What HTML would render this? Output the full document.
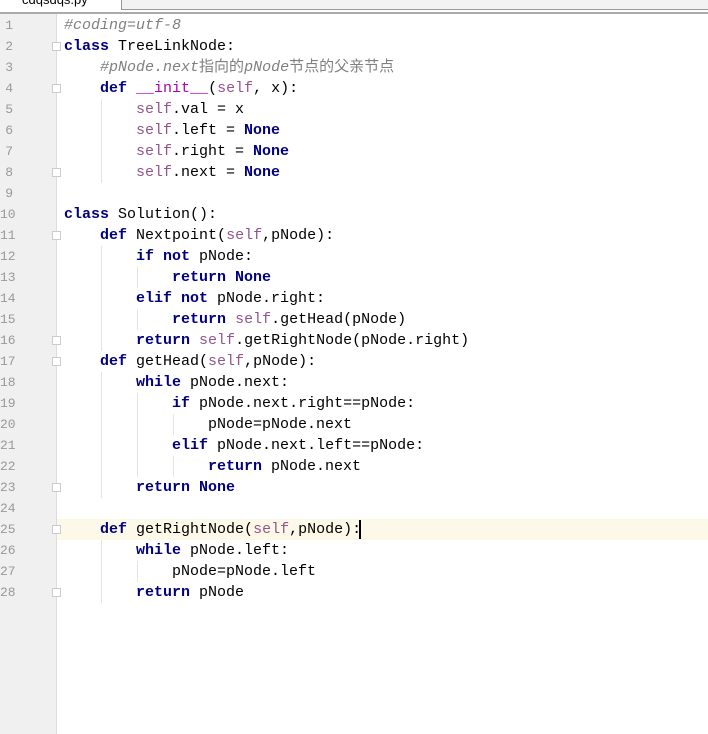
<!DOCTYPE html>
<html><head><meta charset="utf-8"><style>
body{margin:0;width:708px;height:734px;overflow:hidden;background:#fff;position:relative;font-family:"Liberation Mono","Noto Sans CJK SC",monospace;}
.top{position:absolute;left:0;top:0;width:708px;height:9px;background:#f2f2f2;border-bottom:1px solid #999;}
.tab{position:absolute;left:0;top:-6px;width:121px;height:16px;background:#fff;border-right:1px solid #999;font:13px "Liberation Sans",sans-serif;color:#000;}
.tab span{position:absolute;left:22px;top:-2px;}
.sep{position:absolute;left:0;top:12px;width:708px;height:2px;background:#aaa;}
.gut{position:absolute;left:0;top:14px;width:56px;height:720px;background:#f0f0f0;border-right:1px solid #ddd;}
.hl{position:absolute;left:57px;top:519px;width:651px;height:21px;background:#fdf9e8;}
.n{position:absolute;left:0;width:13px;text-align:right;font-size:13px;color:#999;line-height:21px;font-family:"Liberation Mono",monospace;}
.l{position:absolute;left:64px;font-size:15px;line-height:21px;white-space:pre;color:#000;}
.k{color:#000080;font-weight:bold}
.s{color:#94558d}
.c{color:#808080;font-style:italic}
.m{color:#b200b2}
.g{position:absolute;width:1px;background:#e4e4e4;}
.f{position:absolute;left:52px;width:9px;height:9px;border:1px solid #ccc;background:#fff;box-sizing:border-box;}
.cur{position:absolute;left:359px;top:520px;width:2px;height:19px;background:#000;}
</style></head><body>
<div class="top"><div class="tab"><span>cdqsdqs.py</span></div></div>
<div class="sep"></div>
<div class="gut"></div>
<div class="hl"></div>
<div class="n" style="top:15px">1</div><div class="n" style="top:36px">2</div><div class="n" style="top:57px">3</div><div class="n" style="top:78px">4</div><div class="n" style="top:99px">5</div><div class="n" style="top:120px">6</div><div class="n" style="top:141px">7</div><div class="n" style="top:162px">8</div><div class="n" style="top:183px">9</div><div class="n" style="top:204px">10</div><div class="n" style="top:225px">11</div><div class="n" style="top:246px">12</div><div class="n" style="top:267px">13</div><div class="n" style="top:288px">14</div><div class="n" style="top:309px">15</div><div class="n" style="top:330px">16</div><div class="n" style="top:351px">17</div><div class="n" style="top:372px">18</div><div class="n" style="top:393px">19</div><div class="n" style="top:414px">20</div><div class="n" style="top:435px">21</div><div class="n" style="top:456px">22</div><div class="n" style="top:477px">23</div><div class="n" style="top:498px">24</div><div class="n" style="top:519px">25</div><div class="n" style="top:540px">26</div><div class="n" style="top:561px">27</div><div class="n" style="top:582px">28</div>
<div class="f" style="top:42px"></div><div class="f" style="top:84px"></div><div class="f" style="top:168px"></div><div class="f" style="top:231px"></div><div class="f" style="top:336px"></div><div class="f" style="top:357px"></div><div class="f" style="top:483px"></div><div class="f" style="top:525px"></div><div class="f" style="top:588px"></div>
<div class="g" style="left:101px;top:99px;height:84px"></div>
<div class="g" style="left:101px;top:246px;height:105px"></div>
<div class="g" style="left:137px;top:267px;height:21px"></div>
<div class="g" style="left:137px;top:309px;height:21px"></div>
<div class="g" style="left:101px;top:372px;height:126px"></div>
<div class="g" style="left:137px;top:393px;height:84px"></div>
<div class="g" style="left:173px;top:414px;height:21px"></div>
<div class="g" style="left:173px;top:456px;height:21px"></div>
<div class="g" style="left:101px;top:540px;height:63px"></div>
<div class="g" style="left:137px;top:561px;height:21px"></div>
<div class="l" style="top:15px"><span class="c">#coding=utf-8</span></div>
<div class="l" style="top:36px"><span class="k">class</span> TreeLinkNode:</div>
<div class="l" style="top:57px">    <span class="c">#pNode.next</span><span style="color:#808080">指向的</span><span class="c">pNode</span><span style="color:#808080">节点的父亲节点</span></div>
<div class="l" style="top:78px">    <span class="k">def</span> <span class="m">__init__</span>(<span class="s">self</span>, x):</div>
<div class="l" style="top:99px">        <span class="s">self</span>.val = x</div>
<div class="l" style="top:120px">        <span class="s">self</span>.left = <span class="k">None</span></div>
<div class="l" style="top:141px">        <span class="s">self</span>.right = <span class="k">None</span></div>
<div class="l" style="top:162px">        <span class="s">self</span>.next = <span class="k">None</span></div>
<div class="l" style="top:204px"><span class="k">class</span> Solution():</div>
<div class="l" style="top:225px">    <span class="k">def</span> Nextpoint(<span class="s">self</span>,pNode):</div>
<div class="l" style="top:246px">        <span class="k">if not</span> pNode:</div>
<div class="l" style="top:267px">            <span class="k">return None</span></div>
<div class="l" style="top:288px">        <span class="k">elif not</span> pNode.right:</div>
<div class="l" style="top:309px">            <span class="k">return</span> <span class="s">self</span>.getHead(pNode)</div>
<div class="l" style="top:330px">        <span class="k">return</span> <span class="s">self</span>.getRightNode(pNode.right)</div>
<div class="l" style="top:351px">    <span class="k">def</span> getHead(<span class="s">self</span>,pNode):</div>
<div class="l" style="top:372px">        <span class="k">while</span> pNode.next:</div>
<div class="l" style="top:393px">            <span class="k">if</span> pNode.next.right==pNode:</div>
<div class="l" style="top:414px">                pNode=pNode.next</div>
<div class="l" style="top:435px">            <span class="k">elif</span> pNode.next.left==pNode:</div>
<div class="l" style="top:456px">                <span class="k">return</span> pNode.next</div>
<div class="l" style="top:477px">        <span class="k">return None</span></div>
<div class="l" style="top:519px">    <span class="k">def</span> getRightNode(<span class="s">self</span>,pNode):</div>
<div class="l" style="top:540px">        <span class="k">while</span> pNode.left:</div>
<div class="l" style="top:561px">            pNode=pNode.left</div>
<div class="l" style="top:582px">        <span class="k">return</span> pNode</div>
<div class="cur"></div>
</body></html>
